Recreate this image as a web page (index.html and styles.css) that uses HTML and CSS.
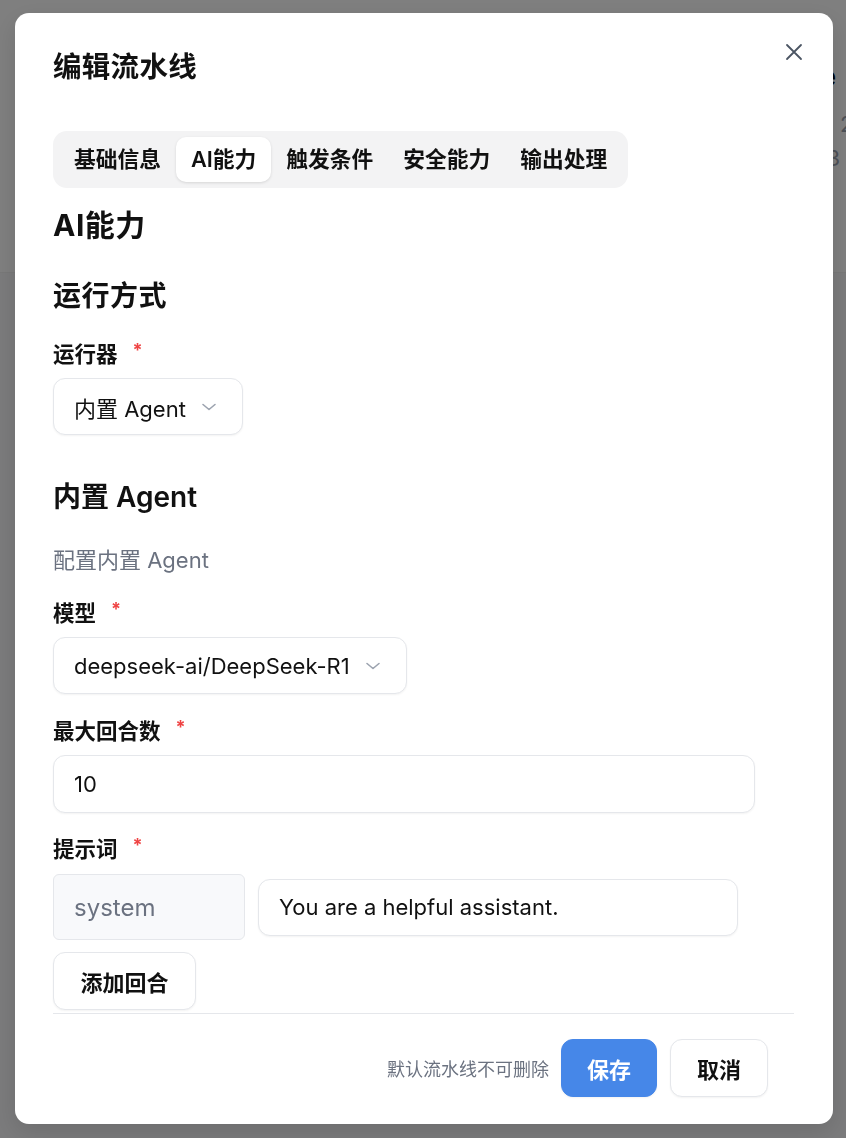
FILE: index.html
```html
<!DOCTYPE html>
<html lang="zh-CN">
<head>
<meta charset="utf-8">
<title>编辑流水线</title>
<link rel="stylesheet" href="styles.css">
</head>
<body>
<div class="page">
  <div class="page-header">
    <div class="bg-title">Pipeline</div>
    <div class="bg-stat-a">2</div>
    <div class="bg-stat-b">3</div>
  </div>
  <div class="page-rest"></div>
</div>

<div class="overlay">
  <div class="modal">
    <button class="close" aria-label="关闭">
      <svg width="20" height="20" viewBox="0 0 20 20" fill="none" stroke="#4b5563" stroke-width="1.8" stroke-linecap="round"><path d="M3 3L17 17M17 3L3 17"/></svg>
    </button>
    <div class="modal-head">
      <h2 class="modal-title">编辑流水线</h2>
    </div>
    <div class="modal-body">
      <div class="tabs">
        <div class="tab">基础信息</div>
        <div class="tab active">AI能力</div>
        <div class="tab">触发条件</div>
        <div class="tab">安全能力</div>
        <div class="tab">输出处理</div>
      </div>

      <h3 class="page-title">AI能力</h3>
      <h4 class="section-title first">运行方式</h4>

      <div class="field f-runner">
        <div class="label">运行器<span class="req">*</span></div>
        <div class="select">
          <span>内置 Agent</span>
          <svg class="chev" width="16" height="16" viewBox="0 0 16 16" fill="none" stroke="#9ca3af" stroke-width="1.6" stroke-linecap="round" stroke-linejoin="round"><path d="M2 5.5l6 5 6-5"/></svg>
        </div>
      </div>

      <h4 class="section-title second">内置 Agent</h4>
      <p class="desc">配置内置 Agent</p>

      <div class="field f-model">
        <div class="label">模型<span class="req">*</span></div>
        <div class="select">
          <span>deepseek-ai/DeepSeek-R1</span>
          <svg class="chev" width="16" height="16" viewBox="0 0 16 16" fill="none" stroke="#9ca3af" stroke-width="1.6" stroke-linecap="round" stroke-linejoin="round"><path d="M2 5.5l6 5 6-5"/></svg>
        </div>
      </div>

      <div class="field f-turns">
        <div class="label">最大回合数<span class="req">*</span></div>
        <div class="input wide">10</div>
      </div>

      <div class="field f-prompt">
        <div class="label">提示词<span class="req">*</span></div>
        <div class="prompt-row">
          <div class="role">system</div>
          <div class="input msg">You are a helpful assistant.</div>
        </div>
      </div>

      <button class="btn add">添加回合</button>
    </div>
    <div class="modal-foot">
      <span class="hint">默认流水线不可删除</span>
      <button class="btn primary">保存</button>
      <button class="btn">取消</button>
    </div>
  </div>
</div>
</body>
</html>
```

FILE: styles.css
```css
* {
  box-sizing: border-box;
  margin: 0;
  padding: 0;
}

html, body {
  height: 100%;
}

body {
  font-family: Inter, "Noto Sans CJK SC", sans-serif;
  color: #111;
  background: #f6f7f8;
  overflow: hidden;
}

/* background page (behind overlay) */
.page-header {
  height: 273px;
  background: #fff;
  border-bottom: 1px solid #f0f0f0;
  padding-top: 60px;
  overflow: hidden;
}

.bg-title {
  width: 836px;
  text-align: right;
  font-size: 26px;
  line-height: 34px;
  font-weight: 700;
  color: #000;
}

.bg-stat-a {
  padding-left: 840px;
  margin-top: 16px;
  font-size: 22px;
  line-height: 28px;
  color: #9ca3af;
  white-space: nowrap;
}

.bg-stat-b {
  width: 840px;
  text-align: right;
  margin-top: 6px;
  font-size: 22px;
  line-height: 28px;
  color: #9ca3af;
}

.overlay {
  position: fixed;
  inset: 0;
  background: rgba(0, 0, 0, 0.5);
  padding: 13px 0 0 15px;
}

.modal {
  position: relative;
  width: 818px;
  height: 1111px;
  background: #fff;
  border-radius: 14px;
  display: flex;
  flex-direction: column;
  box-shadow: 0 8px 24px rgba(0, 0, 0, 0.12);
}

.close {
  position: absolute;
  top: 29px;
  right: 29px;
  width: 20px;
  height: 20px;
  border: 0;
  background: none;
  display: flex;
}

.modal-head {
  padding: 36px 38px 0 38px;
}

.modal-title {
  font-size: 28.5px;
  line-height: 36px;
  font-weight: 700;
  letter-spacing: 0.3px;
}

.modal-body {
  flex: 1;
  overflow: hidden;
  padding: 0 38px;
  display: flex;
  flex-direction: column;
  align-items: flex-start;
}

.tabs {
  margin-top: 46px;
  display: flex;
  padding: 6px;
  height: 57px;
  background: #f3f3f4;
  border-radius: 14px;
}

.tab {
  height: 45px;
  line-height: 45px;
  padding: 0 15px;
  font-size: 21.75px;
  font-weight: 600;
  color: #111;
  border-radius: 10px;
}

.tab.active {
  background: #fff;
  box-shadow: 0 1px 3px rgba(0, 0, 0, 0.12);
}

.page-title {
  margin-top: 19px;
  font-size: 30px;
  line-height: 36px;
  font-weight: 700;
  letter-spacing: 0.5px;
}

.section-title {
  font-size: 28px;
  line-height: 34px;
  font-weight: 600;
}

.section-title.first {
  margin-top: 36px;
  letter-spacing: 0.5px;
}

.section-title.second {
  margin-top: 45px;
}

.desc {
  margin-top: 32px;
  font-size: 22px;
  line-height: 28px;
  color: #6b7280;
}

.field {
  display: flex;
  flex-direction: column;
  align-items: flex-start;
  gap: 10px;
}

.f-runner { margin-top: 27px; }
.f-model { margin-top: 25px; }
.f-turns { margin-top: 23px; }
.f-prompt { margin-top: 22px; gap: 11px; }

.label {
  font-size: 21.5px;
  line-height: 28px;
  font-weight: 600;
  color: #111;
}

.req {
  color: #ef4444;
  margin-left: 15px;
  font-size: 18px;
  font-weight: 700;
  line-height: 20px;
  vertical-align: top;
}

.select {
  height: 57px;
  display: inline-flex;
  align-items: center;
  gap: 15px;
  padding: 0 25px 0 20px;
  border: 1px solid #e5e7eb;
  border-radius: 12px;
  background: #fff;
  box-shadow: 0 1px 2px rgba(0, 0, 0, 0.05);
  font-size: 22px;
  color: #111;
}

.chev {
  flex: none;
}

.input {
  height: 58px;
  display: flex;
  align-items: center;
  padding: 0 20px;
  border: 1px solid #e5e7eb;
  border-radius: 12px;
  background: #fff;
  box-shadow: 0 1px 2px rgba(0, 0, 0, 0.05);
  font-size: 22px;
  color: #111;
}

.input.wide {
  width: 702px;
}

.prompt-row {
  display: flex;
  align-items: center;
  gap: 13px;
}

.role {
  width: 192px;
  height: 66px;
  display: flex;
  align-items: center;
  padding: 0 20px;
  background: #f8f9fb;
  border: 1px solid #e5e7eb;
  border-radius: 6px;
  font-size: 24px;
  color: #6b7280;
}

.input.msg {
  width: 480px;
  height: 57px;
}

.btn {
  font-family: inherit;
  height: 58px;
  padding: 0 26px;
  border: 1px solid #e5e7eb;
  border-radius: 12px;
  background: #fff;
  box-shadow: 0 1px 2px rgba(0, 0, 0, 0.05);
  font-size: 22px;
  font-weight: 600;
  color: #111;
}

.btn.add {
  margin-top: 12px;
  width: 143px;
  padding: 0;
}

.modal-foot {
  margin: 0 39px 0 38px;
  border-top: 1px solid #e5e7eb;
  display: flex;
  justify-content: flex-end;
  align-items: center;
  gap: 12px;
  padding: 25px 26px 27px 0;
}

.hint {
  font-size: 18px;
  color: #6b7280;
}

.btn.primary {
  width: 96px;
  padding: 0;
  background: #4687e8;
  border-color: #4687e8;
  color: #fff;
}

.modal-foot .btn:last-child {
  width: 98px;
  padding: 0;
  margin-left: 1px;
}
```
